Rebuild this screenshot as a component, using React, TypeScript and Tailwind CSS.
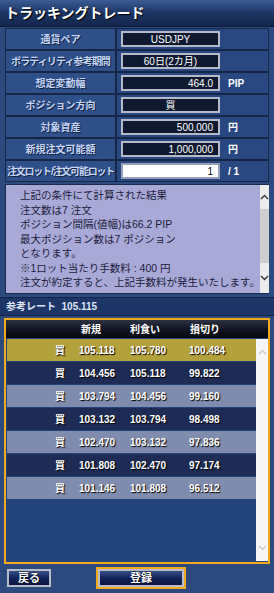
import { ReactNode } from "react";

const fontJP = "font-['Liberation_Sans','Noto_Sans_CJK_JP',sans-serif]";

const formRows: {
  label: string;
  labelClass?: string;
  value: string;
  align: string;
  unit?: string;
  white?: boolean;
}[] = [
  { label: "通貨ペア", value: "USDJPY", align: "justify-center" },
  { label: "ボラティリティ参考期間", labelClass: "tracking-[-0.9px]", value: "60日(2カ月)", align: "justify-center" },
  { label: "想定変動幅", value: "464.0", align: "justify-end", unit: "PIP" },
  { label: "ポジション方向", value: "買", align: "justify-center" },
  { label: "対象資産", value: "500,000", align: "justify-end", unit: "円" },
  { label: "新規注文可能額", value: "1,000,000", align: "justify-end", unit: "円" },
  { label: "注文ロット/注文可能ロット", labelClass: "tracking-[-1.2px]", value: "1", align: "justify-end", unit: "/ 1", white: true },
];

const tradeRows = [
  ["105.118", "105.780", "100.484"],
  ["104.456", "105.118", "99.822"],
  ["103.794", "104.456", "99.160"],
  ["103.132", "103.794", "98.498"],
  ["102.470", "103.132", "97.836"],
  ["101.808", "102.470", "97.174"],
  ["101.146", "101.808", "96.512"],
];

const rowColors = ["bg-[#b3a13c]", "bg-[#1e2b54]", "bg-[#7f8cad]"];

function Chevron({ up, color = "#333" }: { up?: boolean; color?: string }) {
  return (
    <svg width="9" height="6" viewBox="0 0 9 6">
      <path
        d={up ? "M1 5 L4.5 1.5 L8 5" : "M1 1 L4.5 4.5 L8 1"}
        fill="none"
        stroke={color}
        strokeWidth="1.4"
      />
    </svg>
  );
}

function NavButton({ children }: { children: ReactNode }) {
  return (
    <button className="h-[18px] w-full flex items-center justify-center border-2 border-[#b9bccb] bg-gradient-to-b from-[#3a4f86] via-[#14245a] to-[#0c1640] text-[11px] font-bold text-white [text-shadow:0_0_2px_#000]">
      {children}
    </button>
  );
}

export default function App() {
  return (
    <div className={`${fontJP} w-[274px] h-[593px] bg-[#2c4a7e] flex flex-col overflow-hidden`}>
      {/* title */}
      <div className="h-[27px] shrink-0 flex items-center px-[5px] bg-gradient-to-b from-[#3c5c94] via-[#1c3463] to-[#13264c] border-b border-[#0e1c3a]">
        <span className="text-[14px] font-bold text-white [text-shadow:1px_1px_1px_#000]">
          トラッキングトレード
        </span>
      </div>

      {/* form */}
      <div className="flex flex-col px-[5px] pt-[1px]">
        {formRows.map((r) => (
          <div key={r.label} className="h-[22px] flex">
            <div
              className={`w-[111px] shrink-0 flex items-center justify-center whitespace-nowrap border border-[#152646] bg-[#2f4f88] text-[10px] font-bold text-[#c6d6f6] [text-shadow:1px_1px_0_#10203e] ${r.labelClass ?? ""}`}
            >
              {r.label}
            </div>
            <div className="flex-1 flex items-center pl-[4px] border border-[#152646] bg-[#294881]">
              <div
                className={`w-[99px] h-[16px] flex items-center px-[5px] border-2 ${
                  r.white
                    ? "bg-white border-[#9aa0b8] text-black"
                    : "bg-[#0f1a30] border-[#b5b9c8] text-white"
                } ${r.align} text-[10px]`}
              >
                {r.value}
              </div>
              {r.unit && (
                <span className="ml-[8px] text-[10px] font-bold text-white">{r.unit}</span>
              )}
            </div>
          </div>
        ))}
      </div>

      {/* message box */}
      <div className="mt-[2px] mx-[5px] h-[110px] flex border border-[#1a2b50]">
        <div className="flex-1 bg-[#a9a9d7] pl-[14px] pt-[3px] text-[10.5px] leading-[14.5px] text-[#1d1d3d] whitespace-nowrap">
          <div>上記の条件にて計算された結果</div>
          <div>注文数は7 注文</div>
          <div>ポジション間隔(値幅)は66.2 PIP</div>
          <div>最大ポジション数は7 ポジション</div>
          <div>となります。</div>
          <div>※1ロット当たり手数料 : 400 円</div>
          <div>注文が約定すると、上記手数料が発生いたします。</div>
        </div>
        <div className="w-[13px] flex flex-col bg-[#ececec]">
          <div className="h-[24px] flex items-center justify-center">
            <Chevron up />
          </div>
          <div className="h-[54px] bg-[#cfcfcf]" />
          <div className="flex-1 flex items-end justify-center pb-[12px]">
            <Chevron />
          </div>
        </div>
      </div>

      {/* rate bar */}
      <div className="mt-[3px] h-[19px] flex items-center px-[6px] bg-[#1e3568] border-y border-[#13244a] text-[10px] font-bold text-[#dfe4f4]">
        参考レート&nbsp;&nbsp;105.115
      </div>

      {/* table */}
      <div className="mt-[2px] mx-[4px] h-[246px] flex flex-col border-2 border-[#f2a91c] bg-[#23437b]">
        <div className="h-[18px] shrink-0 grid grid-cols-[73px_51px_58px_1fr] items-center bg-gradient-to-b from-[#2c3242] via-[#121624] to-[#05070d] text-[10px] font-bold text-white">
          <span />
          <span className="pl-[2px]">新規</span>
          <span>利食い</span>
          <span className="pl-[2px]">損切り</span>
        </div>
        <div className="flex-1 flex pt-[1px] pb-[1px]">
          <div className="flex-1 flex flex-col gap-[1px] pl-[1px]">
            {tradeRows.map((t, i) => (
              <div
                key={t[0]}
                className={`h-[22px] grid grid-cols-[72px_51px_58px_1fr] items-center text-[10px] font-bold text-white [text-shadow:1px_1px_1px_#000] ${
                  i === 0 ? rowColors[0] : i % 2 === 1 ? rowColors[1] : rowColors[2]
                }`}
              >
                <span className="text-right pr-[14px]">買</span>
                <span>{t[0]}</span>
                <span>{t[1]}</span>
                <span className="pl-[1px]">{t[2]}</span>
              </div>
            ))}
          </div>
          <div className="w-[12px] flex flex-col justify-between bg-[#f6f6f6] py-[10px] items-center">
            <Chevron up color="#c8c8c8" />
            <Chevron color="#c8c8c8" />
          </div>
        </div>
      </div>

      {/* buttons */}
      <div className="flex items-center mt-[3px] px-[7px] gap-[45px]">
        <div className="w-[44px]">
          <NavButton>戻る</NavButton>
        </div>
        <div className="w-[90px] p-[2px] bg-[#f2a91c]">
          <NavButton>登録</NavButton>
        </div>
      </div>
    </div>
  );
}
